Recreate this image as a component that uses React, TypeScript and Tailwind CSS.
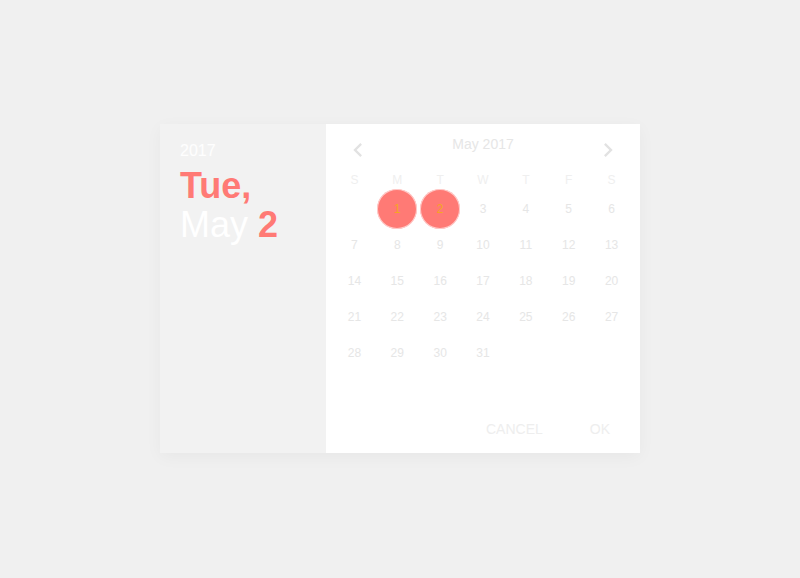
const weekDays = ["S", "M", "T", "W", "T", "F", "S"];

// May 2017 starts on a Monday
const cells: (number | null)[] = [null, ...Array.from({ length: 31 }, (_, i) => i + 1)];

function Chevron({ dir }: { dir: "left" | "right" }) {
  return (
    <svg width="28" height="28" viewBox="0 0 24 24" className="text-[#e2e2e2]">
      {dir === "left" ? (
        <path d="M15.4 7.4 14 6l-6 6 6 6 1.4-1.4L10.8 12z" fill="currentColor" />
      ) : (
        <path d="M8.6 16.6 10 18l6-6-6-6-1.4 1.4 4.6 4.6z" fill="currentColor" />
      )}
    </svg>
  );
}

function DayCell({ day }: { day: number | null }) {
  const selected = day === 1 || day === 2;
  return (
    <div className="flex h-[36px] items-center justify-center">
      {day !== null &&
        (selected ? (
          <div className="flex h-[40px] w-[40px] items-center justify-center rounded-full bg-[#ff7a75] ring-1 ring-inset ring-white/60 text-[12px] text-[#f5a623]">
            {day}
          </div>
        ) : (
          <span className="text-[12px] text-[#e6e6e6]">{day}</span>
        ))}
    </div>
  );
}

export default function App() {
  return (
    <div className="flex h-[578px] w-full items-center justify-center bg-[#f0f0f0] font-['Liberation_Sans',Arial,sans-serif]">
      <div className="mb-[1px] flex h-[329px] w-[480px] shadow-[0_4px_16px_rgba(0,0,0,0.04)]">
        <div className="w-[166px] bg-[#f2f2f2] pl-[20px] pt-[16px] text-white">
          <div className="text-[16px] leading-[22px] text-white/90">2017</div>
          <div className="mt-[4px] text-[36px] leading-[39px]">
            <div className="font-bold text-[#ff7a75]">Tue,</div>
            <div>
              May <span className="font-bold text-[#ff7a75]">2</span>
            </div>
          </div>
        </div>

        <div className="flex flex-1 flex-col bg-white">
          <div className="relative flex h-[41px] items-center justify-between px-[18px]">
            <div className="mt-[10px]">
              <Chevron dir="left" />
            </div>
            <span className="absolute left-1/2 top-[12px] -translate-x-1/2 text-[14px] leading-[16px] text-[#e6e6e6]">
              May 2017
            </span>
            <div className="mt-[10px]">
              <Chevron dir="right" />
            </div>
          </div>

          <div className="px-[7px]">
            <div className="grid h-[26px] grid-cols-7 pt-[3px]">
              {weekDays.map((d, i) => (
                <div key={i} className="flex items-center justify-center text-[12px] text-[#efefef]">
                  {d}
                </div>
              ))}
            </div>
            <div className="grid grid-cols-7">
              {cells.map((d, i) => (
                <DayCell key={i} day={d} />
              ))}
            </div>
          </div>

          <div className="flex-1" />

          <div className="mb-[6px] mr-[14px] flex h-[36px] items-center justify-end gap-[15px]">
            <button className="px-4 text-[14px] uppercase text-[#eeeeee]">Cancel</button>
            <button className="px-4 text-[14px] uppercase text-[#eeeeee]">OK</button>
          </div>
        </div>
      </div>
    </div>
  );
}
